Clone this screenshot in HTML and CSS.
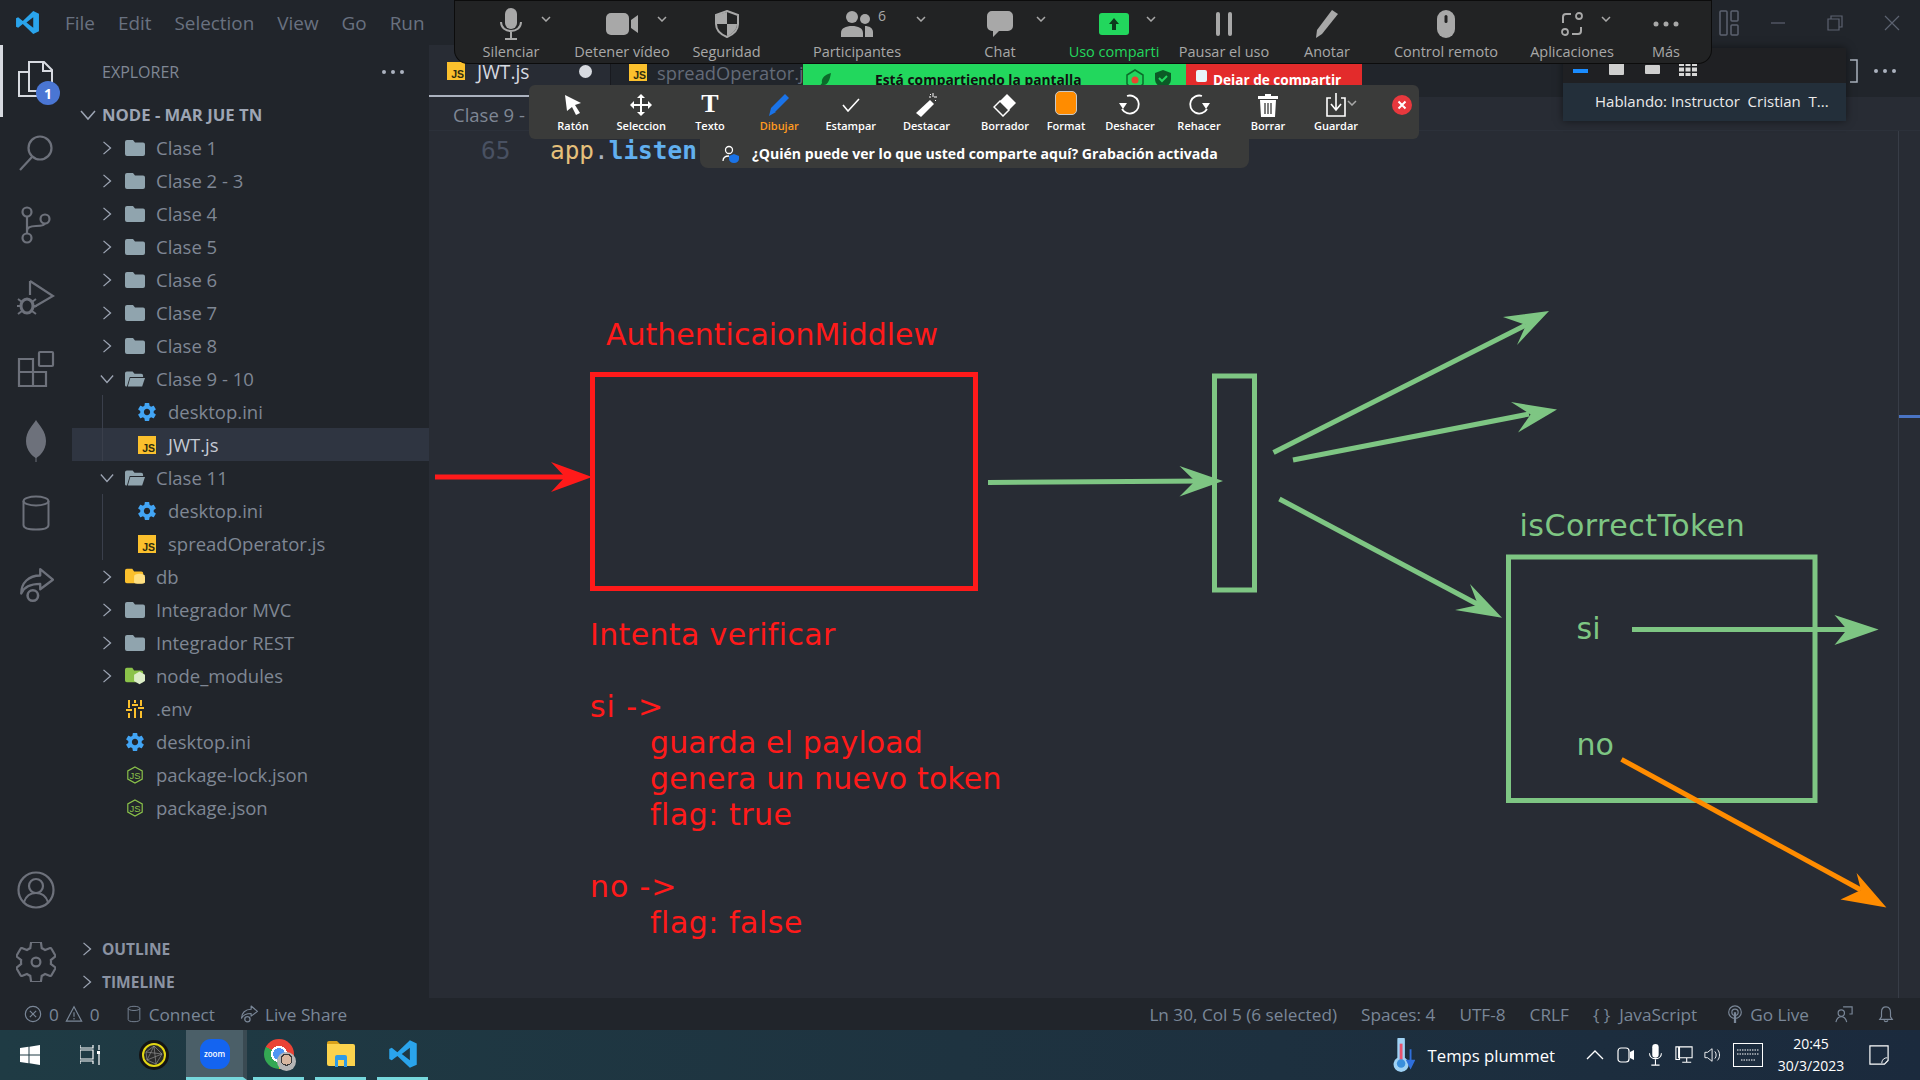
FILE: index.html
```html
<!DOCTYPE html>
<html lang="es">
<head>
<meta charset="utf-8">
<title>Node - VS Code</title>
<link rel="stylesheet" href="styles.css">
</head>
<body>
<svg class="defs" width="0" height="0">
  <defs>
    <symbol id="chev-r" viewBox="0 0 16 16"><path d="M4 1l8 7-8 7" fill="none" stroke="currentColor" stroke-width="1.500"/></symbol>
    <symbol id="chev-d" viewBox="0 0 16 16"><path d="M1 4l7 8 7-8" fill="none" stroke="currentColor" stroke-width="1.500"/></symbol>
    <symbol id="folder" viewBox="0 0 20 16"><path d="M2 0h6l2 2.500h8a2 2 0 0 1 2 2V14a2 2 0 0 1-2 2H2a2 2 0 0 1-2-2V2a2 2 0 0 1 2-2z" fill="#90a4ae"/></symbol>
    <symbol id="folder-open" viewBox="0 0 21 16"><path d="M2 0h6l2 2.500h7a2 2 0 0 1 2 2V6H5L2 16H1.500A1.500 1.500 0 0 1 0 14.500V2a2 2 0 0 1 2-2z" fill="#90a4ae"/><path d="M5.500 7H21l-3 9H3z" fill="#90a4ae"/></symbol>
    <symbol id="gear" viewBox="2 2 20 20"><path fill="#42a5f5" d="M19.430 12.980c.04-.32.07-.64.07-.98s-.03-.66-.07-.98l2.110-1.650c.19-.15.24-.42.12-.64l-2-3.460c-.12-.22-.39-.3-.61-.22l-2.490 1c-.52-.4-1.080-.73-1.690-.98l-.38-2.650C14.460 2.180 14.250 2 14 2h-4c-.25 0-.46.18-.49.42l-.38 2.650c-.61.25-1.170.59-1.690.98l-2.490-1c-.23-.09-.49 0-.61.22l-2 3.460c-.13.22-.07.49.12.64l2.110 1.650c-.04.32-.07.65-.07.98s.03.66.07.98l-2.110 1.650c-.19.15-.24.42-.12.64l2 3.460c.12.22.39.3.61.22l2.490-1c.52.4 1.080.73 1.690.98l.38 2.650c.03.24.24.42.49.42h4c.25 0 .46-.18.49-.42l.38-2.650c.61-.25 1.170-.59 1.690-.98l2.490 1c.23.09.49 0 .61-.22l2-3.460c.12-.22.07-.49-.12-.64l-2.110-1.650zM12 15.500c-1.930 0-3.500-1.570-3.500-3.500s1.570-3.500 3.500-3.500 3.500 1.570 3.500 3.500-1.570 3.500-3.500 3.500z"/></symbol>
    <symbol id="js" viewBox="0 0 18 18"><rect width="18" height="18" fill="#fbc02d"/><text x="17" y="16" text-anchor="end" class="js-glyph">JS</text></symbol>
    <symbol id="nodejs" viewBox="0 0 20 20"><path d="M10 1l8 4.500v9L10 19l-8-4.500v-9z" fill="none" stroke="#8bc34a" stroke-width="1.300"/><text x="10" y="14" text-anchor="middle" class="node-glyph">JS</text></symbol>
    <symbol id="ac-cyl" viewBox="0 0 30 36"><ellipse cx="15" cy="6" rx="12.500" ry="4.500" fill="none" stroke="currentColor" stroke-width="2"/><path d="M2.500 6v24c0 3 5.500 4.500 12.500 4.500S27.500 33 27.500 30V6" fill="none" stroke="currentColor" stroke-width="2"/></symbol>
    <symbol id="ls" viewBox="0 0 36 34"><path d="M22 2l12 10-12 9v-5c-8 0-15 2-18 9 0-10 7-17 18-17z" fill="none" stroke="currentColor" stroke-width="2.200" stroke-linejoin="round"/><circle cx="15" cy="27" r="5" fill="none" stroke="currentColor" stroke-width="2.400"/></symbol>
    <symbol id="chev-z" viewBox="0 0 10 6"><path d="M1 1l4 4 4-4" fill="none" stroke="#a8a8a8" stroke-width="1.500"/></symbol>
  </defs>
</svg>

<div class="app">
  <header class="titlebar">
    <svg class="vs-logo" viewBox="0 0 24 24"><path d="M17.500 1L23 3.500v17L17.500 23 7.500 13.500 3 17 1 16V8l2-1 4.500 3.500zM17.500 7l-6.500 5 6.500 5z" fill="#2aa4ec"/></svg>
    <nav class="menu"><span>File</span><span>Edit</span><span>Selection</span><span>View</span><span>Go</span><span>Run</span></nav>
    <div class="winctl">
      <svg class="wc-layout" viewBox="0 0 20 26"><rect x="1" y="1" width="7" height="24" rx="1"/><rect x="12" y="1" width="7" height="10" rx="1"/><rect x="12" y="15" width="7" height="10" rx="1"/></svg>
      <svg class="wc" viewBox="0 0 16 16"><path d="M1 8h14"/></svg>
      <svg class="wc" viewBox="0 0 16 16"><path d="M1 4h11v11H1zM4 4V1h11v11h-3"/></svg>
      <svg class="wc" viewBox="0 0 16 16"><path d="M1 1l14 14M15 1L1 15"/></svg>
    </div>
  </header>

  <main class="main">
    <aside class="activity">
      <div class="act-top">
        <div class="act act-on">
          <svg width="40" height="42" viewBox="0 0 40 42"><path d="M13 12H3v24h24v-5" fill="none" stroke="#d7dae0" stroke-width="2"/><path d="M13 2h15l8 8v21H13z" fill="#21252b" stroke="#d7dae0" stroke-width="2"/><path d="M27 2v9h9" fill="none" stroke="#d7dae0" stroke-width="2"/></svg>
          <span class="badge">1</span>
        </div>
        <div class="act"><svg width="38" height="38" viewBox="0 0 38 38"><circle cx="23" cy="14" r="11.500" fill="none" stroke="currentColor" stroke-width="2.200"/><path d="M15 23L3 36" stroke="currentColor" stroke-width="2.200"/></svg></div>
        <div class="act"><svg width="32" height="38" viewBox="0 0 32 38"><circle cx="7" cy="6" r="4.500" fill="none" stroke="currentColor" stroke-width="2.200"/><circle cx="7" cy="32" r="4.500" fill="none" stroke="currentColor" stroke-width="2.200"/><circle cx="25" cy="13" r="4.500" fill="none" stroke="currentColor" stroke-width="2.200"/><path d="M7 11v16M7 25c0-4 4-5 9-5s9-1 9-3" fill="none" stroke="currentColor" stroke-width="2.200"/></svg></div>
        <div class="act"><svg width="38" height="38" viewBox="0 0 38 38"><path d="M13 3l23 15-19 11" fill="none" stroke="currentColor" stroke-width="2.200"/><path d="M13 3v14" stroke="currentColor" stroke-width="2.200"/><ellipse cx="10" cy="28" rx="6" ry="7" fill="none" stroke="currentColor" stroke-width="3"/><path d="M1 21l4 3M19 21l-4 3M0 28h4M16 28h4M1 36l4-3M19 36l-4-3" stroke="currentColor" stroke-width="2"/></svg></div>
        <div class="act"><svg width="38" height="38" viewBox="0 0 38 38"><path d="M2 9h14v27H2zM2 22h27v14H16" fill="none" stroke="currentColor" stroke-width="2.200"/><rect x="22" y="2" width="14" height="14" rx="1" fill="none" stroke="currentColor" stroke-width="2.200"/></svg></div>
        <div class="act"><svg width="22" height="42" viewBox="0 0 22 42"><path d="M11 0c3 5 10 11 10 21S14 36 11.500 38V42h-1v-4C8 36 1 31 1 21S8 5 11 0z" fill="currentColor"/></svg></div>
        <div class="act"><svg width="30" height="36"><use href="#ac-cyl"/></svg></div>
        <div class="act"><svg width="38" height="36"><use href="#ls"/></svg></div>
      </div>
      <div class="act-bottom">
        <div class="act"><svg width="38" height="38" viewBox="0 0 38 38"><circle cx="19" cy="19" r="17.500" fill="none" stroke="currentColor" stroke-width="2.200"/><circle cx="19" cy="15" r="7" fill="none" stroke="currentColor" stroke-width="2.200"/><path d="M7 31c2-6 6-9 12-9s10 3 12 9" fill="none" stroke="currentColor" stroke-width="2.200"/></svg></div>
        <div class="act"><svg width="40" height="40" viewBox="2 2 20 20"><path fill="none" stroke="currentColor" stroke-width="1.100" d="M19.430 12.980c.04-.32.07-.64.07-.98s-.03-.66-.07-.98l2.110-1.650c.19-.15.24-.42.12-.64l-2-3.460c-.12-.22-.39-.3-.61-.22l-2.490 1c-.52-.4-1.080-.73-1.690-.98l-.38-2.650C14.460 2.180 14.250 2 14 2h-4c-.25 0-.46.18-.49.42l-.38 2.650c-.61.25-1.170.59-1.690.98l-2.490-1c-.23-.09-.49 0-.61.22l-2 3.460c-.13.22-.07.49.12.64l2.110 1.650c-.04.32-.07.65-.07.98s.03.66.07.98l-2.110 1.650c-.19.15-.24.42-.12.64l2 3.460c.12.22.39.3.61.22l2.490-1c.52.4 1.080.73 1.690.98l.38 2.650c.03.24.24.42.49.42h4c.25 0 .46-.18.49-.42l.38-2.650c.61-.25 1.170-.59 1.690-.98l2.490 1c.23.09.49 0 .61-.22l2-3.460c.12-.22.07-.49-.12-.64l-2.110-1.650z"/><circle cx="12" cy="12" r="2.200" fill="none" stroke="currentColor" stroke-width="1.100"/></svg></div>
      </div>
    </aside>

    <aside class="sidebar">
      <div class="side-head"><span>EXPLORER</span><span class="dots"><i></i><i></i><i></i></span></div>
      <div class="root"><svg class="root-chev"><use href="#chev-d"/></svg><span>NODE - MAR JUE TN</span></div>
      <ul class="tree">
        <li class="row"><svg class="chev"><use href="#chev-r"/></svg><svg class="fold"><use href="#folder"/></svg><span>Clase 1</span></li>
        <li class="row"><svg class="chev"><use href="#chev-r"/></svg><svg class="fold"><use href="#folder"/></svg><span>Clase 2 - 3</span></li>
        <li class="row"><svg class="chev"><use href="#chev-r"/></svg><svg class="fold"><use href="#folder"/></svg><span>Clase 4</span></li>
        <li class="row"><svg class="chev"><use href="#chev-r"/></svg><svg class="fold"><use href="#folder"/></svg><span>Clase 5</span></li>
        <li class="row"><svg class="chev"><use href="#chev-r"/></svg><svg class="fold"><use href="#folder"/></svg><span>Clase 6</span></li>
        <li class="row"><svg class="chev"><use href="#chev-r"/></svg><svg class="fold"><use href="#folder"/></svg><span>Clase 7</span></li>
        <li class="row"><svg class="chev"><use href="#chev-r"/></svg><svg class="fold"><use href="#folder"/></svg><span>Clase 8</span></li>
        <li class="row"><svg class="chev"><use href="#chev-d"/></svg><svg class="fold"><use href="#folder-open"/></svg><span>Clase 9 - 10</span></li>
        <li class="row child"><svg class="fold"><use href="#gear"/></svg><span>desktop.ini</span></li>
        <li class="row child selected"><svg class="fold"><use href="#js"/></svg><span>JWT.js</span></li>
        <li class="row"><svg class="chev"><use href="#chev-d"/></svg><svg class="fold"><use href="#folder-open"/></svg><span>Clase 11</span></li>
        <li class="row child"><svg class="fold"><use href="#gear"/></svg><span>desktop.ini</span></li>
        <li class="row child"><svg class="fold"><use href="#js"/></svg><span>spreadOperator.js</span></li>
        <li class="row"><svg class="chev"><use href="#chev-r"/></svg><svg class="fold" viewBox="0 0 22 18"><path d="M2 0h6l2 3h8a2 2 0 0 1 2 2v11H2a2 2 0 0 1-2-2V2a2 2 0 0 1 2-2z" fill="#fbc02d"/><ellipse cx="16" cy="8" rx="6" ry="2.500" fill="#ffe082"/><path d="M10 8v7c0 2 12 2 12 0V8c0 2-12 2-12 0z" fill="#ffe082"/></svg><span>db</span></li>
        <li class="row"><svg class="chev"><use href="#chev-r"/></svg><svg class="fold"><use href="#folder"/></svg><span>Integrador MVC</span></li>
        <li class="row"><svg class="chev"><use href="#chev-r"/></svg><svg class="fold"><use href="#folder"/></svg><span>Integrador REST</span></li>
        <li class="row"><svg class="chev"><use href="#chev-r"/></svg><svg class="fold" viewBox="0 0 22 18"><path d="M2 0h6l2 3h8a2 2 0 0 1 2 2v11H2a2 2 0 0 1-2-2V2a2 2 0 0 1 2-2z" fill="#8bc34a"/><path d="M16 4l6 3.500v7L16 18l-6-3.500v-7z" fill="#dcedc8"/></svg><span>node_modules</span></li>
        <li class="row flat"><svg class="fold" viewBox="0 0 20 18"><path d="M4 0v8M4 13v5M10 0v3M10 8v10M16 0v6M16 11v7M1 10h6M7 5h6M13 8h6" stroke="#fbc02d" stroke-width="2" fill="none"/></svg><span>.env</span></li>
        <li class="row flat"><svg class="fold"><use href="#gear"/></svg><span>desktop.ini</span></li>
        <li class="row flat"><svg class="fold"><use href="#nodejs"/></svg><span>package-lock.json</span></li>
        <li class="row flat"><svg class="fold"><use href="#nodejs"/></svg><span>package.json</span></li>
      </ul>
      <div class="panels">
        <div class="panel"><svg class="panel-chev"><use href="#chev-r"/></svg><span>OUTLINE</span></div>
        <div class="panel"><svg class="panel-chev"><use href="#chev-r"/></svg><span>TIMELINE</span></div>
      </div>
    </aside>

    <section class="editor">
      <div class="tabs">
        <div class="tab tab-on"><svg class="tab-ic"><use href="#js"/></svg><span class="tab-name">JWT.js</span><i class="dirty"></i></div>
        <div class="tab tab-off"><svg class="tab-ic"><use href="#js"/></svg><span class="tab-name">spreadOperator.js</span></div>
        <div class="tab-rest"><svg class="bracket" viewBox="0 0 8 24"><path d="M0 1h7v22H0" fill="none" stroke="#abb2bf" stroke-width="1.500"/></svg><span class="dots tab-dots"><i></i><i></i><i></i></span></div>
      </div>
      <div class="crumbs">Clase 9 - 10</div>
      <div class="code">
        <div class="code-line"><span class="ln">65</span><code><span class="c-app">app</span><span class="c-dot">.</span><span class="c-fn">listen</span></code></div>
        <i class="mm-mark"></i>
      </div>
      <svg class="board" viewBox="0 0 1491 867" width="1491" height="867">
        <g class="red">
          <text x="177" y="214">AuthenticaionMiddlew</text>
          <rect class="box" x="163.500" y="243.500" width="383" height="214"/>
          <path class="ln-s" d="M6 346H150"/>
          <path class="head" d="M163 346L122 331L136 346L122 361Z"/>
          <text class="sp-wide" x="161" y="514">Intenta verificar</text>
          <text class="sp-arrow" x="161" y="586">si -&gt;</text>
          <text class="sp-thin" x="221" y="622">guarda el payload</text>
          <text class="sp-thin" x="221" y="658">genera un nuevo token</text>
          <text class="sp-flag" x="221" y="694">flag: true</text>
          <text class="sp-arrow" x="161" y="766">no -&gt;</text>
          <text class="sp-flag" x="221" y="802">flag: false</text>
        </g>
        <g class="green">
          <path class="ln-s" d="M559 351.500L776 350"/>
          <path class="head" d="M794 350L750.500 335L766 350L750.500 365.500Z"/>
          <rect class="box" x="785.500" y="245" width="40" height="214"/>
          <path class="ln-s" d="M844.500 321.400L1097 194"/>
          <path class="head" d="M1120 180L1074 186L1097 194L1088 214Z"/>
          <path class="ln-s" d="M864 329L1100 283"/>
          <path class="head" d="M1128 278.600L1082 271L1101.600 283.500L1089 301.400Z"/>
          <path class="ln-s" d="M850.400 368L1050 474"/>
          <path class="head" d="M1073 486.800L1041 453L1049 474L1026 479Z"/>
          <text class="sp-wider" x="1090.500" y="404.700">isCorrectToken</text>
          <rect class="box" x="1079.500" y="426" width="306.500" height="243.500"/>
          <text x="1147.500" y="508">si</text>
          <text x="1147.400" y="624">no</text>
          <path class="ln-s" d="M1203 498.600H1420"/>
          <path class="head" d="M1449.600 498.600L1405.500 484L1418 498.600L1405.500 514Z"/>
        </g>
        <g class="orange">
          <path class="ln-s" d="M1192.500 628.400L1432 759"/>
          <path class="head" d="M1457.400 776.500L1427.600 742L1432 759L1411.500 768.400Z"/>
        </g>
      </svg>
    </section>
  </main>

  <footer class="status">
    <div class="st-left">
      <svg class="st-ic" viewBox="0 0 20 20"><circle cx="10" cy="10" r="8.500"/><path d="M6.500 6.500l7 7M13.500 6.500l-7 7"/></svg><span class="st-num">0</span>
      <svg class="st-ic" viewBox="0 0 20 20"><path d="M10 2l8.500 16h-17zM10 8v5M10 14.500v1.500"/></svg><span class="st-num">0</span>
      <svg class="st-cyl"><use href="#ac-cyl"/></svg><span class="st-connect">Connect</span>
      <svg class="st-ls"><use href="#ls"/></svg><span>Live Share</span>
    </div>
    <div class="st-right">
      <span>Ln 30, Col 5 (6 selected)</span><span>Spaces: 4</span><span>UTF-8</span><span>CRLF</span>
      <span>{ }&nbsp;&nbsp;JavaScript</span>
      <span class="st-live"><svg class="st-ic" viewBox="0 0 20 20"><circle cx="10" cy="8" r="7"/><circle cx="10" cy="8" r="3.500"/><path d="M10 8v12" stroke-width="2.500"/></svg>Go Live</span>
      <svg class="st-ic st-fb" viewBox="0 0 20 20"><circle cx="7" cy="9" r="3.500"/><path d="M1 19c1-4 3-6 6-6s5 2 6 6M9 2h10v8h-3"/></svg>
      <svg class="st-ic" viewBox="0 0 20 20"><path d="M10 2c-4 0-5 3-5 6v5l-2 3h14l-2-3V8c0-3-1-6-5-6zM8 17c0 2 4 2 4 0"/></svg>
    </div>
  </footer>

  <footer class="taskbar">
    <div class="tb-left">
      <svg class="tb-win" viewBox="0 0 20 20"><path d="M0 3l8.500-1.200V9.500H0zM9.500 1.700L20 0v9.500H9.500zM0 10.500h8.500v7.700L0 17zM9.500 10.500H20V20l-10.500-1.700z" fill="#fff"/></svg>
      <svg class="tb-task" viewBox="0 0 20 20"><path d="M0 0v3h13V0M0 5h13v9H0zM0 19v-3h13v3M19 0v5M19 9v11" stroke="#fff" fill="none" stroke-width="1.200"/><rect x="17" y="6" width="3" height="3" fill="#fff"/></svg>
      <svg class="tb-orb" viewBox="0 0 30 30"><circle cx="15" cy="15" r="15" fill="#141414"/><circle cx="15" cy="15" r="11" fill="#2a2a2a" stroke="#e3d714" stroke-width="2"/><path d="M7 12l8-6 8 8-6 10-9-4zM15 6l2 18M7 12l16 2M8 20l7-14M23 14l-15 6" stroke="#9a9a9a" stroke-width=".6" fill="none"/></svg>
      <span class="tb-cell tb-active"><span class="tb-zoom">zoom</span></span>
      <span class="tb-cell tb-open"><span class="tb-chrome"><i class="tb-avatar"></i></span></span>
      <span class="tb-cell tb-open"><svg class="tb-ex" viewBox="0 0 28 26"><path d="M0 2a2 2 0 0 1 2-2h8l3 3h-13z" fill="#d9a21b"/><path d="M0 3h26a2 2 0 0 1 2 2v20H2a2 2 0 0 1-2-2z" fill="#fcd34d"/><path d="M10 14h8a2 2 0 0 1 2 2v10h-3v-7h-6v7H8V16a2 2 0 0 1 2-2z" fill="#2f9be6"/></svg></span>
      <span class="tb-cell tb-open"><svg class="tb-vs" viewBox="0 0 24 24"><path d="M17.500 1L23 3.500v17L17.500 23 7.500 13.500 3 17 1 16V8l2-1 4.500 3.500zM17.500 7l-6.500 5 6.500 5z" fill="#2aa4ec"/></svg></span>
    </div>
    <div class="tb-right">
      <svg class="tb-therm" viewBox="0 0 24 36"><path d="M6 2a4 4 0 0 1 8 0v19a8 8 0 1 1-8 0z" fill="#9fd2f5"/><path d="M8.500 6h3v17h-3z" fill="#e8526d"/><circle cx="10" cy="27" r="4.500" fill="#3a8fdc"/><path d="M20 12v16M16.500 24L20 31l3.500-7z" stroke="#2f6fdb" stroke-width="2" fill="#2f6fdb"/></svg>
      <span class="tb-news">Temps plummet</span>
      <svg class="tb-tray tb-up" viewBox="0 0 18 12"><path d="M1 10l8-8 8 8" fill="none" stroke="#fff" stroke-width="1.300"/></svg>
      <svg class="tb-tray" viewBox="0 0 18 22"><rect x="1" y="4" width="11" height="14" rx="3" fill="none" stroke="#fff" stroke-width="1.200"/><path d="M13 8l4-2v10l-4-2z" fill="#fff"/></svg>
      <svg class="tb-tray" viewBox="0 0 14 24"><rect x="4" y="0" width="7" height="15" rx="3.500" fill="#fff"/><path d="M1 10c0 8 13 8 13 0M7.500 17v6M3 23h9" stroke="#fff" fill="none" stroke-width="1.200"/></svg>
      <svg class="tb-tray" viewBox="0 0 20 20"><path d="M4 1h15v12H4zM1 1h4v14H1zM8 18h10M13 13v5" stroke="#fff" fill="none" stroke-width="1.200"/></svg>
      <svg class="tb-tray" viewBox="0 0 20 20"><path d="M1 7h3l5-4v14l-5-4H1zM12 6c2 2 2 6 0 8M15 4c3 3 3 9 0 12" stroke="#fff" fill="none" stroke-width="1"/></svg>
      <svg class="tb-kbd" viewBox="0 0 30 24"><rect x=".5" y=".5" width="29" height="23" fill="none" stroke="#fff"/><path d="M4 7h22M4 11h22M8 17h14" stroke="#fff" stroke-dasharray="1.500 1"/></svg>
      <div class="tb-clock"><span>20:45</span><span>30/3/2023</span></div>
      <svg class="tb-notif" viewBox="0 0 22 22"><path d="M1 1h20v16l-4 4H1z" fill="none" stroke="#fff" stroke-width="1.300"/><path d="M14 20c0-4 3-6 6-6" fill="none" stroke="#fff"/></svg>
    </div>
  </footer>
</div>

<div class="z-bar">
  <div class="z-item"><svg class="z-ic" width="22" height="32" viewBox="0 0 22 32"><rect x="5" y="0" width="12" height="21" rx="6" fill="#a8a8a8"/><path d="M1 14c0 12 20 12 20 0M11 24v6M5 31h12" fill="none" stroke="#a8a8a8" stroke-width="2"/></svg><svg class="z-chev z-chev-1"><use href="#chev-z"/></svg><span>Silenciar</span></div>
  <div class="z-item"><svg class="z-ic" width="32" height="22" viewBox="0 0 32 22"><rect width="23" height="22" rx="5" fill="#a8a8a8"/><path d="M25 7l7-5v18l-7-5z" fill="#a8a8a8"/></svg><svg class="z-chev z-chev-2"><use href="#chev-z"/></svg><span>Detener vídeo</span></div>
  <div class="z-item"><svg class="z-ic" width="24" height="28" viewBox="0 0 24 28"><path d="M12 1l11 4v9c0 7-6 11-11 13C7 25 1 21 1 14V5z" fill="none" stroke="#a8a8a8" stroke-width="2"/><path d="M12 2v12H2V5zM12 14h10c0 6-5 10-10 12z" fill="#a8a8a8"/></svg><span>Seguridad</span></div>
  <div class="z-item"><svg class="z-ic" width="32" height="26" viewBox="0 0 32 26"><circle cx="11" cy="6" r="6" fill="#a8a8a8"/><circle cx="24" cy="8" r="5" fill="#a8a8a8"/><path d="M0 26v-4c0-5 5-7 11-7s11 2 11 7v4zM24 15c4 0 8 2 8 6v5h-8z" fill="#a8a8a8"/></svg><em class="z-count">6</em><svg class="z-chev z-chev-4"><use href="#chev-z"/></svg><span>Participantes</span></div>
  <div class="z-item"><svg class="z-ic" width="26" height="26" viewBox="0 0 26 26"><path d="M5 0h16a5 5 0 0 1 5 5v10a5 5 0 0 1-5 5H12l-6 6v-6H5a5 5 0 0 1-5-5V5a5 5 0 0 1 5-5z" fill="#a8a8a8"/></svg><svg class="z-chev z-chev-5"><use href="#chev-z"/></svg><span>Chat</span></div>
  <div class="z-item z-green"><svg class="z-ic" width="30" height="22" viewBox="0 0 30 22"><rect width="30" height="22" rx="3" fill="#22d75d"/><path d="M15 5l-5 6h3v6h4v-6h3z" fill="#0c3a1c"/></svg><svg class="z-chev z-chev-6"><use href="#chev-z"/></svg><span>Uso comparti</span></div>
  <div class="z-item"><svg class="z-ic" width="16" height="24" viewBox="0 0 16 24"><rect x="0" width="4" height="24" rx="2" fill="#a8a8a8"/><rect x="12" width="4" height="24" rx="2" fill="#a8a8a8"/></svg><span>Pausar el uso</span></div>
  <div class="z-item"><svg class="z-ic" width="22" height="28" viewBox="0 0 22 28"><path d="M16 0l6 4L6 24 0 28l1-8z" fill="#a8a8a8"/></svg><span>Anotar</span></div>
  <div class="z-item"><svg class="z-ic" width="18" height="28" viewBox="0 0 18 28"><rect width="18" height="28" rx="9" fill="#a8a8a8"/><rect x="7.500" y="5" width="3" height="8" rx="1.500" fill="#222"/></svg><span>Control remoto</span></div>
  <div class="z-item"><svg class="z-ic" width="22" height="26" viewBox="0 0 22 26"><path d="M10 3H5a3 3 0 0 0-3 3v6M20 16v4a3 3 0 0 1-3 3h-6" fill="none" stroke="#a8a8a8" stroke-width="2"/><circle cx="18" cy="5" r="3" fill="none" stroke="#a8a8a8" stroke-width="1.800"/><circle cx="4" cy="21" r="3" fill="none" stroke="#a8a8a8" stroke-width="1.800"/></svg><svg class="z-chev z-chev-10"><use href="#chev-z"/></svg><span>Aplicaciones</span></div>
  <div class="z-item"><svg class="z-ic" width="26" height="6" viewBox="0 0 26 6"><circle cx="3" cy="3" r="2.500" fill="#a8a8a8"/><circle cx="13" cy="3" r="2.500" fill="#a8a8a8"/><circle cx="23" cy="3" r="2.500" fill="#a8a8a8"/></svg><span>Más</span></div>
</div>

<div class="share-bar">
  <div class="share-green">
    <svg class="sh-leaf" viewBox="0 0 14 14"><path d="M12 0C5 2 2 6 3 10l-3 4c2 0 4-1 5-2 4 0 6-6 7-12z" fill="#0b6b2a"/></svg>
    <span class="sh-text">Está compartiendo la pantalla</span>
    <svg class="sh-rec" viewBox="0 0 20 20"><path d="M10 1l8 5v9l-4 4H6l-4-4V6z" fill="none" stroke="#0b6b2a" stroke-width="1.500"/><circle cx="10" cy="11" r="3.500" fill="#e8462f"/></svg>
    <svg class="sh-shield" viewBox="0 0 16 18"><path d="M8 0l8 3v6c0 5-4 8-8 9-4-1-8-4-8-9V3z" fill="#0b5a26"/><path d="M4 8l3 3 5-5" stroke="#22d75d" stroke-width="2" fill="none"/></svg>
  </div>
  <div class="share-red"><i class="sh-stop"></i><span>Dejar de compartir</span></div>
</div>

<div class="anno">
  <div class="an-bar">
    <div class="an-item"><svg class="an-ic" width="20" height="24" viewBox="0 0 20 24"><path d="M2 2l16 8-6 2 5 8-4 2-4-8-5 4z" fill="#fff"/></svg><span>Ratón</span></div>
    <div class="an-item"><svg class="an-ic" width="22" height="22" viewBox="0 0 22 22"><path d="M11 0l4 4h-3v6h6V7l4 4-4 4v-3h-6v6h3l-4 4-4-4h3v-6H4v3l-4-4 4-4v3h6V4H7z" fill="#fff"/></svg><span>Seleccion</span></div>
    <div class="an-item"><b class="an-t">T</b><span>Texto</span></div>
    <div class="an-item an-draw"><svg class="an-ic" width="20" height="22" viewBox="0 0 20 22"><path d="M16 0l4 4L7 17 2 20l0-6z" fill="#1a73e8"/><path d="M0 22l2-8 5 4z" fill="#1a73e8"/></svg><span>Dibujar</span></div>
    <div class="an-item"><svg class="an-ic" width="18" height="14" viewBox="0 0 18 14"><path d="M1 7l5 6L17 1" fill="none" stroke="#fff" stroke-width="1.600"/></svg><span>Estampar</span></div>
    <div class="an-item"><svg class="an-ic" width="22" height="24" viewBox="0 0 22 24"><path d="M14 7l4 4L5 24 0 20z" fill="#fff"/><path d="M17 0v4M21 4h-3M13 4h2M20 8l-1-1M14 1l1 1" stroke="#fff"/></svg><span>Destacar</span></div>
    <div class="an-item"><svg class="an-ic" width="24" height="24" viewBox="0 0 24 24"><path d="M14 1l9 9-13 13-9-9z" fill="#fff"/><path d="M7 8l9 9-6 6-9-9z" fill="#3a3b3a" stroke="#fff" stroke-width="1.500"/></svg><span>Borrador</span></div>
    <div class="an-item"><i class="an-swatch"></i><span>Format</span></div>
    <div class="an-item"><svg class="an-ic" width="22" height="24" viewBox="0 0 22 24"><path d="M8 3a9 9 0 1 1-5 13" fill="none" stroke="#fff" stroke-width="1.800"/><path d="M0 10h8l-4 6z" fill="#fff"/></svg><span>Deshacer</span></div>
    <div class="an-item"><svg class="an-ic" width="22" height="24" viewBox="0 0 22 24"><path d="M14 3a9 9 0 1 0 5 13" fill="none" stroke="#fff" stroke-width="1.800"/><path d="M22 10h-8l4 6z" fill="#fff"/></svg><span>Rehacer</span></div>
    <div class="an-item"><svg class="an-ic" width="20" height="24" viewBox="0 0 20 24"><path d="M7 1h6v2h7v3H0V3h7zM2 7h16l-1 17H3z" fill="#fff"/><path d="M7 10v11M10 10v11M13 10v11" stroke="#3a3b3a" stroke-width="1.300"/></svg><span>Borrar</span></div>
    <div class="an-item"><svg class="an-ic" width="20" height="24" viewBox="0 0 20 24"><path d="M5 5H1v18h18V5h-4M10 0v16M5 11l5 6 5-6" fill="none" stroke="#fff" stroke-width="1.600"/></svg><svg class="an-chev"><use href="#chev-z"/></svg><span>Guardar</span></div>
    <svg class="an-close" viewBox="0 0 20 20"><circle cx="10" cy="10" r="10" fill="#e8383d"/><path d="M6.500 6.500l7 7M13.500 6.500l-7 7" stroke="#fff" stroke-width="2"/></svg>
  </div>
  <div class="an-who">
    <svg class="an-who-ic" viewBox="0 0 18 18"><circle cx="7" cy="5" r="3.500" fill="none" stroke="#fff" stroke-width="1.300"/><path d="M1 16c0-4 3-5 6-5" fill="none" stroke="#fff" stroke-width="1.300"/><path d="M12 9l5 2v3c0 2-2 4-5 4s-5-2-5-4v-3z" fill="#1a73e8"/></svg>
    <span>¿Quién puede ver lo que usted comparte aquí? Grabación activada</span>
  </div>
</div>

<div class="speaker">
  <div class="sp-top">
    <i class="sp-a"></i><i class="sp-b"></i><i class="sp-c"></i>
    <svg class="sp-grid" viewBox="0 0 18 14"><path d="M0 0h5v4H0zM6.500 0h5v4h-5zM13 0h5v4h-5zM0 5.500h5v4H0zM6.500 5.500h5v4h-5zM13 5.500h5v4h-5zM0 11h5v3H0zM6.500 11h5v3h-5zM13 11h5v3h-5z" fill="#d8d8d8"/></svg>
  </div>
  <div class="sp-name">Hablando: Instructor&nbsp; Cristian&nbsp; T...</div>
</div>
</body>
</html>
```

FILE: styles.css
```css
* { box-sizing: border-box; }
html, body { margin: 0; height: 100%; overflow: hidden; background: #21252b; }
body { font-family: "Open Sans", "Noto Sans", sans-serif; }
.defs { position: absolute; }
ul { list-style: none; margin: 0; padding: 0; }
svg { display: block; flex: none; }
.js-glyph { font: 700 10.500px "Liberation Sans", sans-serif; fill: #2b2b10; }
.node-glyph { font: 400 10.500px "Liberation Sans", sans-serif; fill: #8bc34a; }

.app { display: flex; flex-direction: column; width: 1920px; height: 1080px; }

/* title bar */
.titlebar { height: 45px; flex: none; display: flex; align-items: center; padding-left: 15px; background: #21252b; color: #697180; }
.vs-logo { width: 25px; height: 25px; }
.menu { display: flex; gap: 23px; margin-left: 25px; font-size: 18.900px; }
.winctl { margin-left: auto; display: flex; align-items: center; gap: 41px; padding-right: 20px; }
.wc-layout { width: 20px; height: 26px; margin-right: -10px; fill: none; stroke: #5c6270; stroke-width: 1.500; }
.wc { width: 16px; height: 16px; fill: none; stroke: #5c6270; stroke-width: 1.200; }

.main { flex: 1; min-height: 0; display: flex; }

/* activity bar */
.activity { width: 72px; flex: none; display: flex; flex-direction: column; justify-content: space-between; color: #6d717b; background: #21252b; }
.act { height: 72px; display: flex; align-items: center; justify-content: center; position: relative; border-left: 3px solid transparent; padding-right: 3px; }
.act-on { border-left-color: #d7dae0; color: #d7dae0; }
.badge { position: absolute; left: 33px; top: 36px; width: 24px; height: 24px; border-radius: 50%; background: #4a76d4; color: #fff; font-size: 14px; font-weight: 700; display: flex; align-items: center; justify-content: center; }
.act-bottom .act { height: 72px; }

/* sidebar */
.sidebar { width: 357px; flex: none; display: flex; flex-direction: column; background: #21252b; color: #7f8794; font-size: 18.500px; }
.side-head { display: flex; justify-content: space-between; align-items: center; height: 53px; padding: 0 25px 0 30px; font-size: 16px; color: #7f8794; }
.dots { display: flex; gap: 5px; }
.dots i { width: 4px; height: 4px; border-radius: 50%; background: #abb2bf; }
.root { height: 33px; display: flex; align-items: center; font-weight: 700; font-size: 16.700px; color: #9da5b4; padding-left: 8px; }
.root-chev { width: 16px; height: 16px; margin-right: 6px; color: #9da5b4; }
.row { height: 33px; display: flex; align-items: center; padding-left: 28px; position: relative; white-space: nowrap; }
.chev { width: 14px; height: 14px; margin-right: 11px; color: #9da5b4; }
.fold { width: 20px; height: 18px; margin-right: 11px; }
.child { padding-left: 65px; }
.child::before { content: ""; position: absolute; left: 30px; top: 0; bottom: 0; width: 1px; background: #3a3f4b; }
.flat { padding-left: 53px; }
.selected { background: #2f3541; color: #c5cad3; }
.panels { margin-top: auto; }
.panel { height: 33px; display: flex; align-items: center; padding-left: 8px; font-weight: 700; font-size: 15.500px; color: #8b93a3; }
.panel-chev { width: 14px; height: 14px; margin-right: 8px; color: #9da5b4; }

/* editor */
.editor { flex: 1; min-width: 0; position: relative; background: #282c34; }
.tabs { height: 52px; display: flex; background: #21252b; position: relative; }
.tab { width: 193px; display: flex; align-items: center; padding: 2px 0 0 18px; color: #646b78; font-size: 19.200px; background: #21252b; overflow: hidden; white-space: nowrap; border-left: 1px solid #181a1f; }
.tab-off { font-size: 18.300px; }
.tab-off .tab-ic { margin-right: 10px; }
.tab-on { width: 181px; background: #282c34; color: #d7dae0; border-left: 0; border-bottom: 2px solid #abb2bf; position: relative; }
.tab-ic { width: 18px; height: 18px; margin-right: 12px; }
.dirty { position: absolute; left: 150px; top: 20px; width: 13px; height: 13px; border-radius: 50%; background: #d7dae0; }
.tab-rest { flex: 1; display: flex; align-items: center; justify-content: flex-end; gap: 16px; padding-right: 24px; }
.bracket { width: 8px; height: 24px; }
.crumbs { height: 34px; display: flex; align-items: center; padding: 1px 0 0 24px; font-size: 18.500px; color: #7f8794; border-bottom: 1px solid #2c313a; }
.code { position: relative; height: calc(100% - 86px); }
.code::after { content: ""; position: absolute; right: 21px; top: 0; bottom: 0; width: 1px; background: #383d47; }
.code-line { display: flex; align-items: center; height: 38px; font: 24.400px "DejaVu Sans Mono", monospace; }
.ln { width: 121px; padding-left: 52px; color: #495162; }
.c-app { color: #e5c07b; }
.c-dot { color: #abb2bf; }
.c-fn { color: #61afef; font-weight: 700; }
.mm-mark { position: absolute; right: 0; top: 284px; width: 21px; height: 3px; background: #4a74c4; }

/* drawing */
.board { position: absolute; left: 0; top: 86px; font: 30px "DejaVu Sans", sans-serif; }
.board .box { fill: none; stroke-width: 5; }
.board .ln-s { fill: none; stroke-width: 5; }
.sp-thin { letter-spacing: .13px; }
.sp-wide { letter-spacing: .35px; }
.sp-wider { letter-spacing: .5px; }
.sp-flag { letter-spacing: .5px; }
.sp-arrow { letter-spacing: .9px; }
.red text { fill: #ff1a1a; } .red .box, .red .ln-s { stroke: #ff1a1a; } .red .head { fill: #ff1a1a; }
.green text { fill: #7ec683; } .green .box, .green .ln-s { stroke: #7ec683; } .green .head { fill: #7ec683; }
.orange .ln-s { stroke: #ff8c00; } .orange .head { fill: #ff8c00; }

/* status bar */
.status { height: 32px; flex: none; display: flex; justify-content: space-between; align-items: center; background: #21252b; color: #7a8798; font-size: 17.200px; padding: 0 25px 0 24px; white-space: nowrap; }
.st-left, .st-right { display: flex; align-items: center; }
.st-ic { width: 18px; height: 18px; fill: none; stroke: currentColor; stroke-width: 1.300; }
.st-num { margin: 0 6px 0 7px; }
.st-num + .st-cyl { margin-left: 21px; }
.st-cyl { width: 14px; height: 18px; margin-right: 8px; }
.st-connect { margin-right: 24px; }
.st-ls { width: 20px; height: 18px; margin-right: 6px; }
.st-right { gap: 24px; }
.st-live { display: flex; align-items: center; gap: 6px; margin-left: 5px; }
.st-fb { margin-left: 2px; }

/* taskbar */
.taskbar { height: 50px; flex: none; display: flex; justify-content: space-between; background: linear-gradient(90deg, #1f3b44, #1e3340 50%, #1b2a3d); color: #fff; }
.tb-left, .tb-right { display: flex; align-items: center; }
.tb-win { width: 20px; height: 20px; margin-left: 20px; }
.tb-task { width: 20px; height: 20px; margin-left: 40px; }
.tb-orb { width: 30px; height: 30px; margin-left: 39px; }
.tb-cell { width: 51px; height: 50px; margin-left: 11px; display: flex; align-items: center; justify-content: center; border-bottom: 3px solid #76d7dc; }
.tb-active { width: 61px; margin-left: 17px; background: #4b5f68; border-right: 4px solid #3a4a52; }
.tb-active + .tb-open { margin-left: 6px; }
.tb-zoom { width: 30px; height: 30px; border-radius: 11px; background: #1464f0; font-size: 8px; font-weight: 600; color: #fff; display: flex; align-items: center; justify-content: center; }
.tb-chrome { position: relative; width: 30px; height: 30px; border-radius: 50%; background: radial-gradient(circle, #4f95f3 0 6px, #fff 6px 8px, transparent 8px), conic-gradient(#ea4335 0 33%, #fbbc04 33% 50%, #34a853 50% 83%, #ea4335 83%); }
.tb-avatar { position: absolute; right: -2px; bottom: -2px; width: 19px; height: 19px; border-radius: 50%; background: radial-gradient(circle at 50% 40%, #d8b7a0 0 5px, #3a3a3a 5px 6px, #b5b5b5 6px); }
.tb-ex { width: 28px; height: 26px; }
.tb-vs { width: 30px; height: 30px; }
.tb-therm { width: 24px; height: 34px; }
.tb-news { margin: 0 31px 0 13px; font-size: 16.700px; }
.tb-tray { width: 18px; height: 22px; margin-right: 11px; }
.tb-up { height: 12px; margin-right: 13px; }
.tb-kbd { width: 30px; height: 24px; }
.tb-clock { width: 88px; margin-left: 4px; display: flex; flex-direction: column; align-items: center; font-size: 14px; line-height: 22px; }
.tb-notif { width: 20px; height: 22px; margin: 0 31px 0 14px; }

/* zoom meeting bar */
.z-bar { position: absolute; z-index: 5; left: 454px; top: -1px; height: 65px; width: 1258px; display: grid; grid-template-columns: 112px 110px 99px 162px 124px 104px 116px 90px 148px 104px 84px; background: #222324; border: 1px solid #0c0c0c; border-top: 2px solid #0c0c0c; border-radius: 0 0 14px 14px; color: #a8a8a8; font-size: 14.500px; }
.z-item { position: relative; text-align: center; white-space: nowrap; }
.z-item > span { position: absolute; left: 0; right: 0; top: 41px; line-height: 20px; }
.z-ic { position: absolute; left: 50%; top: 23px; transform: translate(-50%, -50%); }
.z-green { color: #22d75d; }
.z-chev { position: absolute; width: 10px; height: 6px; top: 15px; }
.z-chev-1 { left: 86px; } .z-chev-2 { left: 90px; } .z-chev-4 { left: 140px; } .z-chev-5 { left: 98px; } .z-chev-6 { left: 84px; } .z-chev-10 { left: 81px; }
.z-count { position: absolute; left: 102px; top: 5px; font-style: normal; font-size: 14px; }

/* sharing strip */
.share-bar { position: absolute; z-index: 3; left: 803px; top: 64px; width: 559px; height: 21px; display: flex; overflow: hidden; font-size: 13.800px; font-weight: 700; white-space: nowrap; }
.share-green { width: 383px; background: #22d75d; color: #111; display: flex; align-items: center; padding-top: 10px; position: relative; }
.sh-leaf { width: 14px; height: 14px; margin-left: 16px; }
.sh-text { margin-left: 42px; }
.sh-rec { width: 20px; height: 20px; position: absolute; left: 322px; top: 5px; }
.sh-shield { width: 16px; height: 18px; position: absolute; left: 352px; top: 6px; }
.share-red { flex: 1; background: #e32b2b; color: #fff; font-size: 13.600px; display: flex; align-items: center; padding: 10px 0 0 10px; gap: 6px; }
.sh-stop { width: 11px; height: 12px; border-radius: 2px; background: #e8f6fa; margin-top: -8px; }

/* annotation bar */
.anno { position: absolute; z-index: 4; left: 529px; top: 85px; width: 890px; }
.an-bar { height: 54px; padding-left: 10px; background: #3a3b3a; border-radius: 6px; display: grid; grid-template-columns: 68px 68.500px 69px 69.500px 73.500px 78px 79px 43px 85px 53px 85px 51px 1fr; color: #fff; font-size: 11px; font-weight: 600; position: relative; }
.an-item { position: relative; text-align: center; white-space: nowrap; }
.an-item > span { position: absolute; left: 0; right: 0; top: 32px; line-height: 18px; }
.an-ic { position: absolute; left: 50%; top: 20px; transform: translate(-50%, -50%); }
.an-t { position: absolute; left: 0; right: 0; top: 4px; font: 700 26px/30px "Liberation Serif", serif; }
.an-draw { color: #ff9a1f; }
.an-swatch { position: absolute; left: 50%; top: 6px; width: 22px; height: 24px; margin-left: -11px; border-radius: 5px; background: #ff8c00; border: 1px solid #c9c9c9; }
.an-chev { position: absolute; width: 10px; height: 6px; left: 36px; top: 15px; }
.an-close { position: absolute; right: 7px; top: 10px; width: 20px; height: 20px; }
.an-who { width: 549px; height: 29px; margin-left: 171px; padding-left: 22px; background: #3a3b3a; border-radius: 0 0 8px 8px; display: flex; align-items: center; gap: 12px; color: #fff; font-size: 14.100px; font-weight: 700; white-space: nowrap; }
.an-who-ic { width: 18px; height: 18px; }

/* speaker view popup */
.speaker { position: absolute; z-index: 2; left: 1563px; top: 48px; width: 283px; height: 73px; box-shadow: 0 0 8px rgba(0,0,0,.5); }
.sp-top { height: 35px; background: #1f2023; display: flex; align-items: center; gap: 21px; padding: 7px 0 0 10px; }
.sp-a { width: 15px; height: 4px; background: #1a8cff; margin-top: 3px; }
.sp-b { width: 15px; height: 12px; border-radius: 1px; background: #cfcfcf; }
.sp-c { width: 15px; height: 9px; border-radius: 1px; background: #cfcfcf; }
.sp-grid { width: 18px; height: 14px; margin-left: -2px; }
.sp-name { height: 38px; background: #232f3a; color: #eaeaea; font-size: 15px; line-height: 36px; padding-left: 32px; white-space: nowrap; }
```
